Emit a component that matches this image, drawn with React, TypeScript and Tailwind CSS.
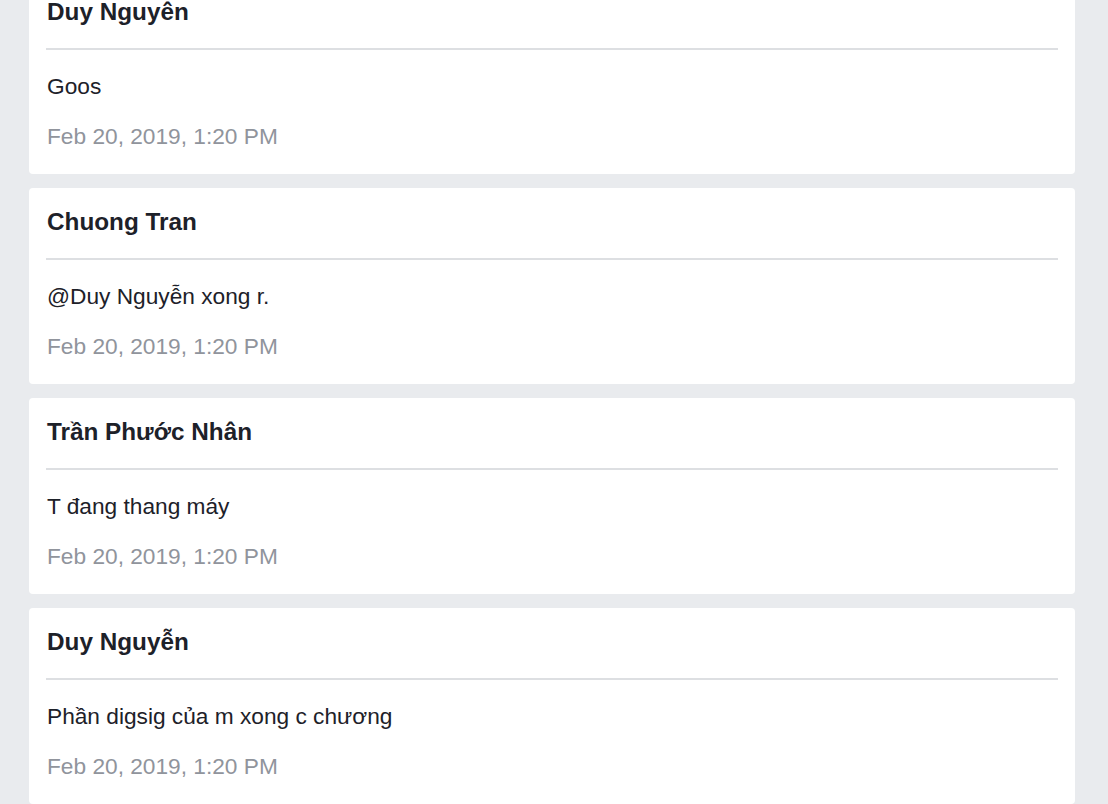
import React from "react";

const comments = [
  { name: "Duy Nguyên", text: "Goos" },
  { name: "Chuong Tran", text: "@Duy Nguyễn xong r." },
  { name: "Trần Phước Nhân", text: "T đang thang máy" },
  { name: "Duy Nguyễn", text: "Phần digsig của m xong c chương" },
];

export default function App() {
  return (
    <div
      className="w-[1108px] h-[804px] overflow-hidden bg-[#e9ebee]"
      style={{ fontFamily: '"Liberation Sans", Arial, sans-serif' }}
    >
      <div className="-mt-[22px] ml-[29px] w-[1046px] flex flex-col gap-[14px]">
        {comments.map((c, i) => (
          <div key={i} className="bg-white rounded-[4px] h-[196px] px-[18px] pt-[20px] pb-[24px] flex flex-col">
            <div className="text-[24.3px] leading-[28px] font-bold text-[#1d2129]">{c.name}</div>
            <div className="mt-[22px] h-[2px] bg-[#dddfe2] -mr-[1px] -ml-[1px]" />
            <div className="mt-[23px] text-[22.7px] leading-[26px] text-[#1d2129]">{c.text}</div>
            <div className="mt-[24px] text-[22.7px] leading-[26px] text-[#90949c]">Feb 20, 2019, 1:20 PM</div>
          </div>
        ))}
      </div>
    </div>
  );
}
